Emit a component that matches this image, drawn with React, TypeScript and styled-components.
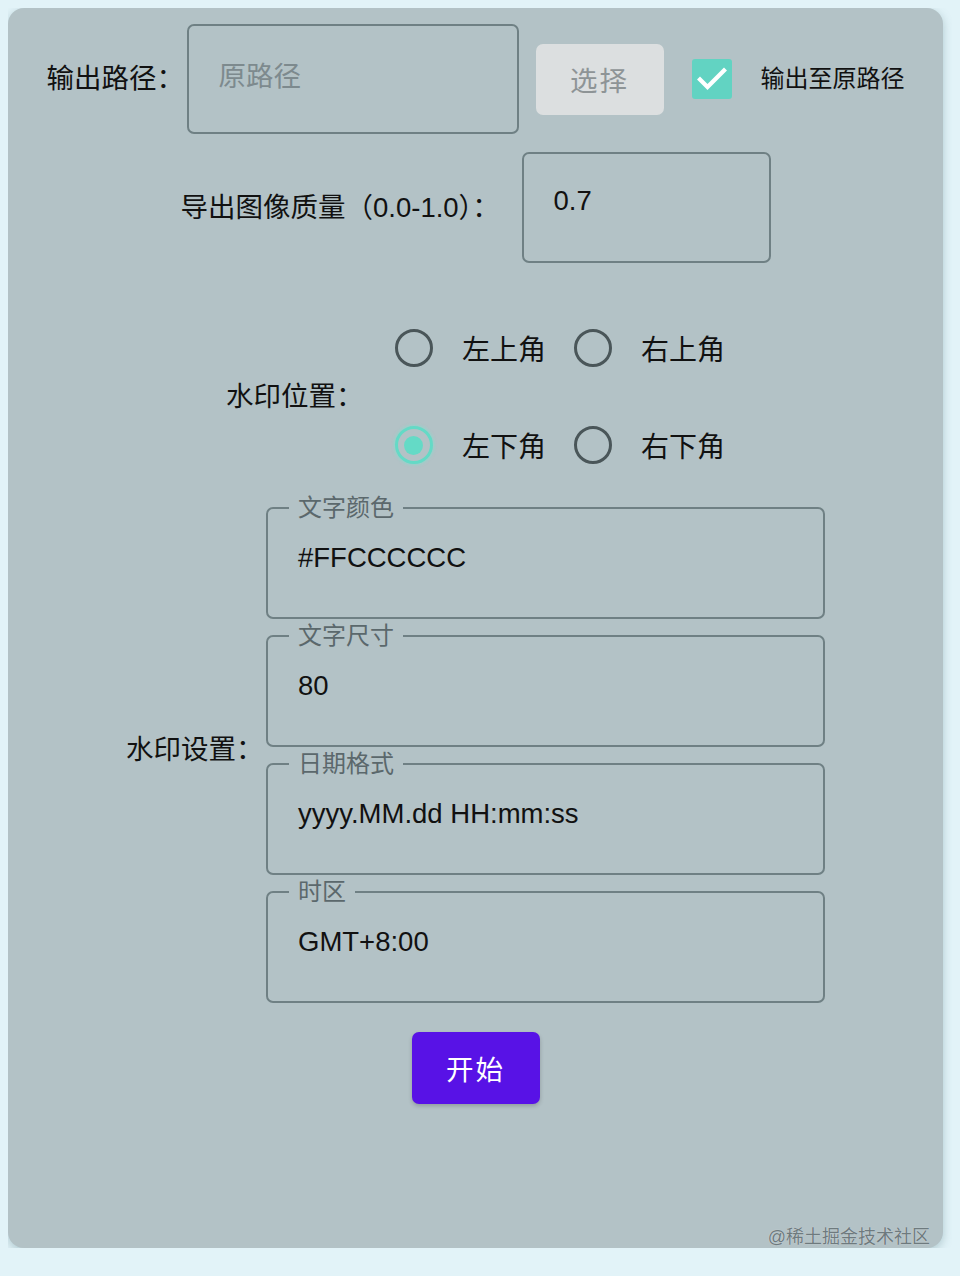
import React from "react";
import styled, { createGlobalStyle } from "styled-components";

const Global = createGlobalStyle`
  html, body { padding: 0; }
  body {
    margin: 8px;
    background: #e2f3f8;
    font-family: "Liberation Sans", "Noto Sans CJK SC", sans-serif;
    color: #111;
  }
`;

const Panel = styled.main`
  position: relative;
  box-sizing: border-box;
  width: 935px;
  height: 1240px;
  padding-top: 16px;
  background: #b3c2c6;
  border-radius: 16px;
  box-shadow: 0 3px 10px rgba(80, 120, 130, 0.35);
  display: flex;
  flex-direction: column;
  align-items: center;
`;

const Row = styled.section<{ $top: number }>`
  display: flex;
  align-items: center;
  margin-top: ${(p) => p.$top}px;
`;

const Label = styled.span<{ $gap: number; $w?: number }>`
  box-sizing: border-box;
  ${(p) => (p.$w ? `width: ${p.$w}px;` : "")}
  font-size: 27.5px;
  line-height: 32px;
  white-space: nowrap;
  margin-right: ${(p) => p.$gap}px;
`;

const TextBox = styled.div<{ $w: number; $h: number; $muted?: boolean }>`
  box-sizing: border-box;
  width: ${(p) => p.$w}px;
  height: ${(p) => p.$h}px;
  border: 2px solid #6f8084;
  border-radius: 7px;
  padding: ${(p) => (p.$muted ? 35 : 30.5)}px 30px 0;
  font-size: 27.5px;
  line-height: 32px;
  color: ${(p) => (p.$muted ? "#7d8a8e" : "#111")};
`;

const SelectButton = styled.button`
  box-sizing: border-box;
  width: 128px;
  height: 71px;
  margin-left: 17px;
  border: none;
  border-radius: 7px;
  background: #dcdfe0;
  color: #8e9496;
  font-family: inherit;
  font-size: 27.5px;
  letter-spacing: 2px;
  padding: 0;
`;

const CheckGroup = styled.label`
  display: flex;
  align-items: center;
  gap: 29px;
  margin-left: 28px;
  font-size: 24px;
  line-height: 32px;
  white-space: nowrap;
`;

const CheckBox = styled.svg`
  display: block;
  width: 40px;
  height: 40px;
  flex: none;
`;

const RadioGrid = styled.div`
  display: grid;
  grid-template-columns: auto auto;
  column-gap: 28px;
  row-gap: 49px;
  margin-left: 31.5px;
`;

const RadioOption = styled.label`
  display: flex;
  align-items: center;
  gap: 29px;
  height: 48px;
  font-size: 28px;
  white-space: nowrap;
`;

const RadioRing = styled.span<{ $checked?: boolean }>`
  position: relative;
  box-sizing: border-box;
  width: 38px;
  height: 38px;
  border-radius: 50%;
  border: 3.8px solid ${(p) => (p.$checked ? "#64dac6" : "#4a5659")};
  box-shadow: ${(p) => (p.$checked ? "0 0 3px 1px rgba(120, 230, 210, 0.55)" : "none")};
  display: flex;
  align-items: center;
  justify-content: center;
  &::after {
    content: "";
    display: ${(p) => (p.$checked ? "block" : "none")};
    width: 19px;
    height: 19px;
    border-radius: 50%;
    background: #64dac6;
  }
`;

const FieldStack = styled.div`
  display: flex;
  flex-direction: column;
  gap: 5px;
  width: 559px;
`;

const Field = styled.fieldset`
  box-sizing: border-box;
  height: 123px;
  margin: 0;
  min-width: 0;
  padding: 21.5px 0 0 21px;
  border: 2px solid #6f8084;
  border-radius: 7px;
`;

const Legend = styled.legend`
  padding: 0 9px;
  font-size: 24px;
  line-height: 24px;
  color: #5b686c;
`;

const FieldValue = styled.div`
  padding-left: 9px;
  font-size: 27.5px;
  line-height: 32px;
  white-space: nowrap;
`;

const StartButton = styled.button`
  box-sizing: border-box;
  width: 128px;
  height: 72px;
  margin-top: 29px;
  border: none;
  border-radius: 7px;
  background: #5812e6;
  color: #fff;
  font-family: inherit;
  font-size: 27.5px;
  letter-spacing: 2px;
  padding: 0;
  box-shadow: 0 2px 4px rgba(0, 0, 0, 0.2);
`;

const Watermark = styled.span`
  position: absolute;
  right: 13px;
  bottom: -1px;
  font-size: 18px;
  line-height: 24px;
  color: #6e7a7e;
  text-shadow: 0 0 1px rgba(255, 255, 255, 0.6);
`;

const positions: { text: string; checked?: boolean }[] = [
  { text: "左上角" },
  { text: "右上角" },
  { text: "左下角", checked: true },
  { text: "右下角" },
];

const fields = [
  { legend: "文字颜色", value: "#FFCCCCCC" },
  { legend: "文字尺寸", value: "80" },
  { legend: "日期格式", value: "yyyy.MM.dd HH:mm:ss" },
  { legend: "时区", value: "GMT+8:00" },
];

export default function App() {
  return (
    <>
      <Global />
      <Panel>
        <Row $top={0}>
          <Label $gap={2.5}>输出路径：</Label>
          <TextBox $w={332} $h={110} $muted>
            原路径
          </TextBox>
          <SelectButton>选择</SelectButton>
          <CheckGroup>
            <CheckBox viewBox="0 0 40 40">
              <rect x="0" y="0" width="40" height="40" rx="3" fill="#62d3c2" />
              <polyline
                points="8,20.5 15.5,28 32,11.5"
                fill="none"
                stroke="#fff"
                strokeWidth="4.2"
                strokeLinecap="square"
              />
            </CheckBox>
            输出至原路径
          </CheckGroup>
        </Row>

        <Row $top={18}>
          <Label $gap={0} $w={341}>
            导出图像质量（0.0-1.0）：
          </Label>
          <TextBox $w={249} $h={111}>
            0.7
          </TextBox>
        </Row>

        <Row $top={61}>
          <Label $gap={0}>水印位置：</Label>
          <RadioGrid>
            {positions.map((p) => (
              <RadioOption key={p.text}>
                <RadioRing $checked={p.checked} />
                {p.text}
              </RadioOption>
            ))}
          </RadioGrid>
        </Row>

        <Row $top={27}>
          <Label $gap={2.5}>水印设置：</Label>
          <FieldStack>
            {fields.map((f) => (
              <Field key={f.legend}>
                <Legend>{f.legend}</Legend>
                <FieldValue>{f.value}</FieldValue>
              </Field>
            ))}
          </FieldStack>
        </Row>

        <StartButton>开始</StartButton>

        <Watermark>@稀土掘金技术社区</Watermark>
      </Panel>
    </>
  );
}
